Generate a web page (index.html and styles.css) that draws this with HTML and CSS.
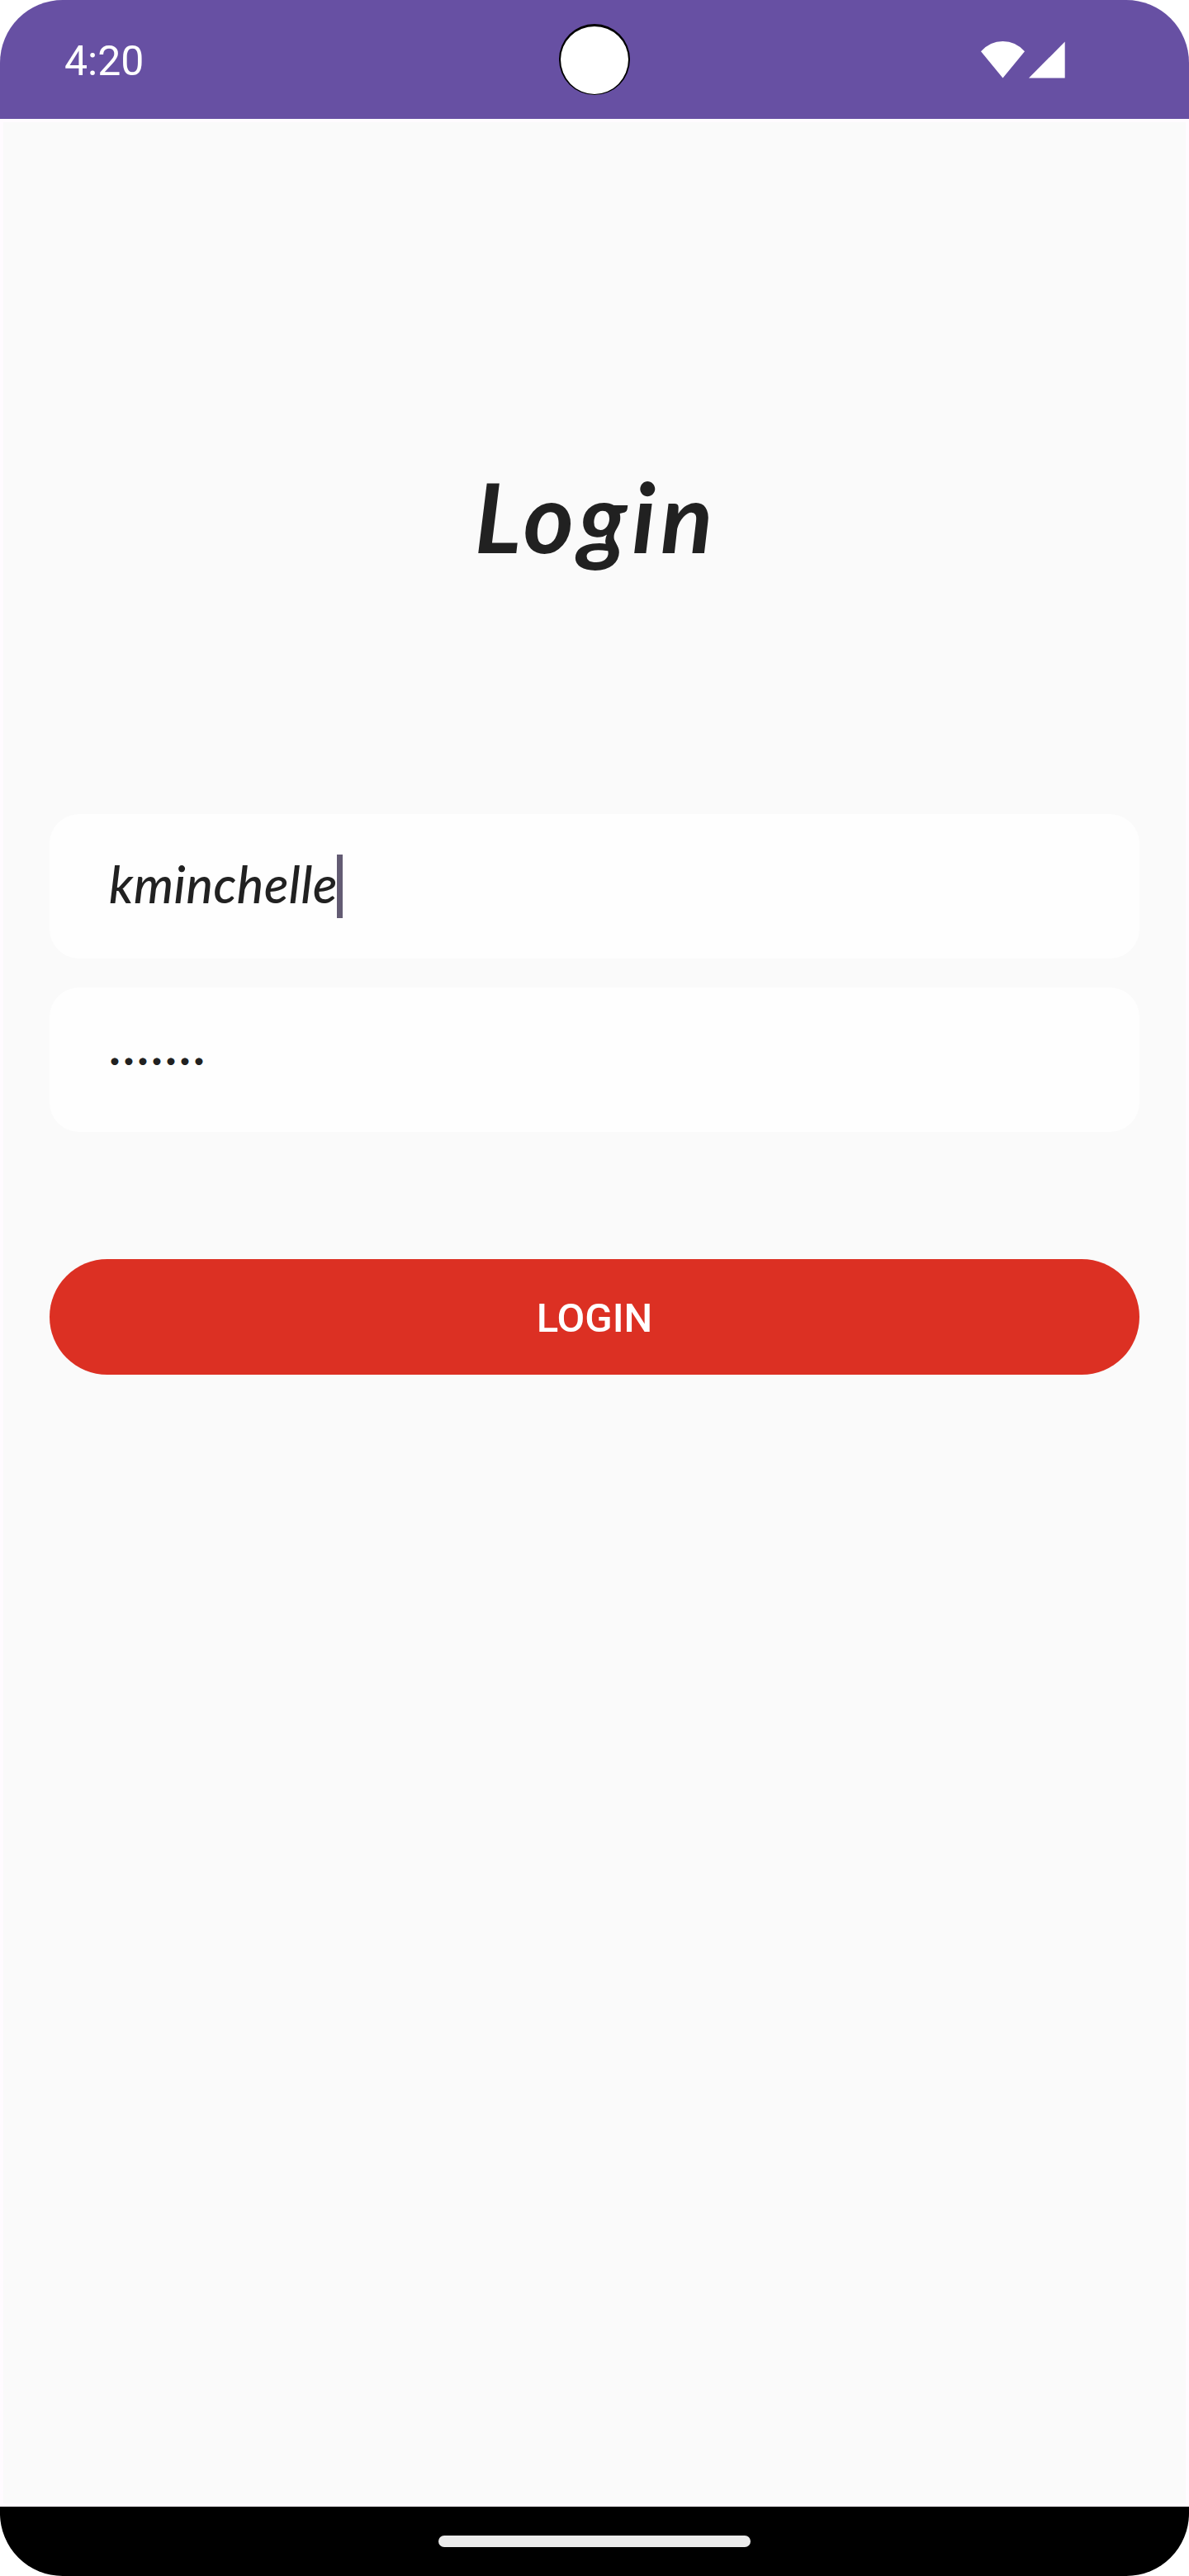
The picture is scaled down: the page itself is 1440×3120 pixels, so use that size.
FILE: index.html
```html
<!DOCTYPE html>
<html lang="en">
<head>
<meta charset="utf-8">
<title>Login</title>
<link rel="stylesheet" href="styles.css">
</head>
<body>
<div class="phone">
  <header class="status-bar">
    <span class="clock">4:20</span>
    <span class="camera"></span>
    <span class="status-icons">
      <svg width="53" height="45" viewBox="0 0 53 45"><path fill="#fff" d="M26.500 44.500 0 12.200Q11 0 26.500 0T53 12.200Z"/></svg>
      <svg width="44" height="45" viewBox="0 0 44 45"><path fill="#fff" d="M0 44.600 43.700 0.500V44.600Z"/></svg>
    </span>
  </header>
  <main class="screen">
    <h1 class="title">Login</h1>
    <div class="field"><span class="value">kminchelle</span><span class="caret"></span></div>
    <div class="field"><span class="password">•••••••</span></div>
    <button class="submit">LOGIN</button>
  </main>
  <footer class="nav-bar"><span class="handle"></span></footer>
</div>
</body>
</html>
```
FILE: styles.css
```css
* { box-sizing: border-box; }
body { margin: 0; background: #fff; }
.phone {
  width: 1440px;
  height: 3120px;
  display: flex;
  flex-direction: column;
  border-radius: 76px;
  overflow: hidden;
}
.status-bar {
  height: 144px;
  flex: none;
  display: grid;
  grid-template-columns: 1fr 86px 1fr;
  align-items: center;
  padding: 0 77px;
  background: #6750a3;
  color: #fff;
}
.clock {
  font: 400 50px/58px Roboto, sans-serif;
  padding: 4px 0 0 1px;
}
.camera {
  width: 86px;
  height: 86px;
  border-radius: 50%;
  background: #fff;
  border: 2px solid #000;
  border-top-width: 3px;
  border-bottom-width: 1px;
}
.status-icons {
  display: flex;
  justify-content: flex-end;
  gap: 5px;
  padding-right: 73px;
}
.status-icons svg { display: block; }
.screen {
  flex: 1;
  display: flex;
  flex-direction: column;
  padding: 0 56px;
  border: 4px solid #fffbff;
  background: #fafafa;
  color: #212121;
  font-family: Lato, sans-serif;
}
.title {
  margin: 407px 0 291px;
  height: 140px;
  font-size: 117px;
  line-height: 140px;
  font-style: italic;
  font-weight: 700;
  letter-spacing: 6px;
  padding-left: 4px;
  text-align: center;
}
.field {
  height: 175px;
  flex: none;
  display: flex;
  align-items: center;
  padding-left: 72px;
  margin-bottom: 35px;
  border-radius: 36px;
  background: #fefefe;
}
.value {
  width: 276px;
  margin-top: -6px;
  font-size: 61px;
  font-style: italic;
  font-weight: 500;
  letter-spacing: 0.6px;
  line-height: 76px;
  white-space: nowrap;
}
.caret { width: 7px; height: 77px; background: #635b73; }
.password {
  font-size: 24px;
  line-height: 30px;
  letter-spacing: 3.1px;
}
.submit {
  height: 140px;
  flex: none;
  margin-top: 119px;
  padding: 4px 0 0;
  border: 0;
  border-radius: 70px;
  background: #dc3023;
  color: #fff;
  font: 500 49px/58px Roboto, sans-serif;
}
.nav-bar {
  height: 84px;
  flex: none;
  display: flex;
  justify-content: center;
  padding-top: 35px;
  background: #000;
}
.handle { width: 378px; height: 14px; border-radius: 7px; background: #ebebeb; }
```
